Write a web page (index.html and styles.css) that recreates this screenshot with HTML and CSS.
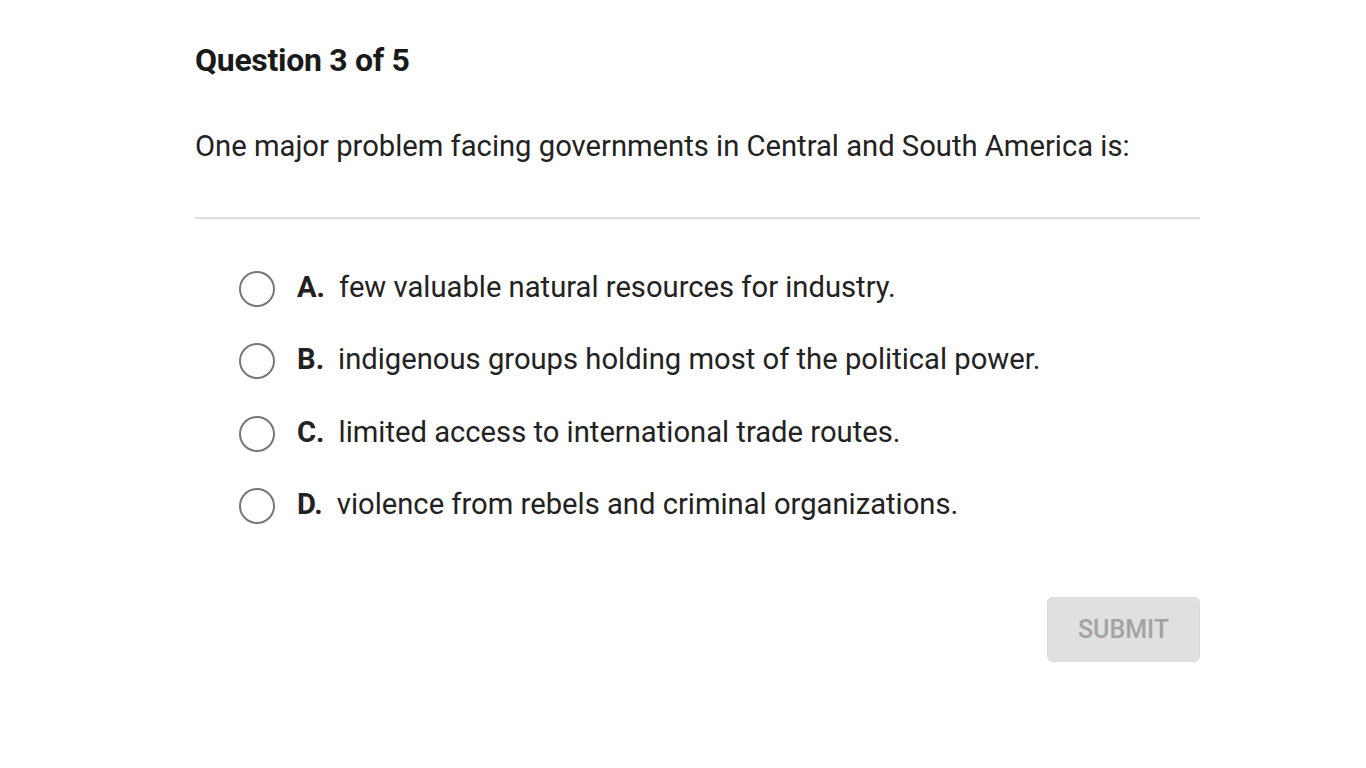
FILE: index.html
```html
<!DOCTYPE html>
<html>
<head>
<meta charset="utf-8">
<link rel="stylesheet" href="styles.css">
</head>
<body>
<div class="quiz">
  <h1 class="title">Question 3 of 5</h1>
  <p class="question">One major problem facing governments in Central and South America is:</p>
  <hr class="divider">
  <ul class="options">
    <li class="option"><span class="radio"></span><span class="letter">A.</span><span class="text">few valuable natural resources for industry.</span></li>
    <li class="option"><span class="radio"></span><span class="letter">B.</span><span class="text">indigenous groups holding most of the political power.</span></li>
    <li class="option"><span class="radio"></span><span class="letter">C.</span><span class="text">limited access to international trade routes.</span></li>
    <li class="option"><span class="radio"></span><span class="letter">D.</span><span class="text">violence from rebels and criminal organizations.</span></li>
  </ul>
  <div class="actions">
    <button class="submit">SUBMIT</button>
  </div>
</div>
</body>
</html>
```
FILE: styles.css
```css
html, body {
  margin: 0;
  padding: 0;
  background: #ffffff;
}
body {
  font-family: Roboto, "Liberation Sans", sans-serif;
  color: #222222;
}
.quiz {
  width: 1005px;
  margin-left: 195px;
  padding-top: 40px;
}
.title {
  margin: 0;
  font-size: 32px;
  font-weight: 700;
  line-height: 40px;
  color: #1a1a1a;
  letter-spacing: -0.3px;
}
.question {
  margin: 50px 0 0 0;
  font-size: 29.2px;
  line-height: 32px;
  color: #222222;
}
.divider {
  margin: 55px 0 0 0;
  border: none;
  height: 2px;
  background: #dddddd;
}
.options {
  list-style: none;
  margin: 50px 0 0 0;
  padding: 0 0 0 44px;
  display: flex;
  flex-direction: column;
  gap: 36.3px;
}
.option {
  display: flex;
  align-items: center;
  height: 36px;
  font-size: 29.2px;
}
.radio {
  width: 32px;
  height: 32px;
  border: 2px solid #777777;
  border-radius: 50%;
  flex: none;
  margin: 4px 22px 0 0;
}
.letter {
  font-weight: 700;
  margin-right: 14px;
}
.actions {
  display: flex;
  justify-content: flex-end;
  margin-top: 75px;
}
.submit {
  width: 153px;
  height: 65px;
  background: #e0e0e0;
  border: 1px solid #dadada;
  border-radius: 6px;
  color: #a3a3a3;
  font-family: Roboto, "Liberation Sans", sans-serif;
  font-size: 25px;
  font-weight: 500;
}
```
